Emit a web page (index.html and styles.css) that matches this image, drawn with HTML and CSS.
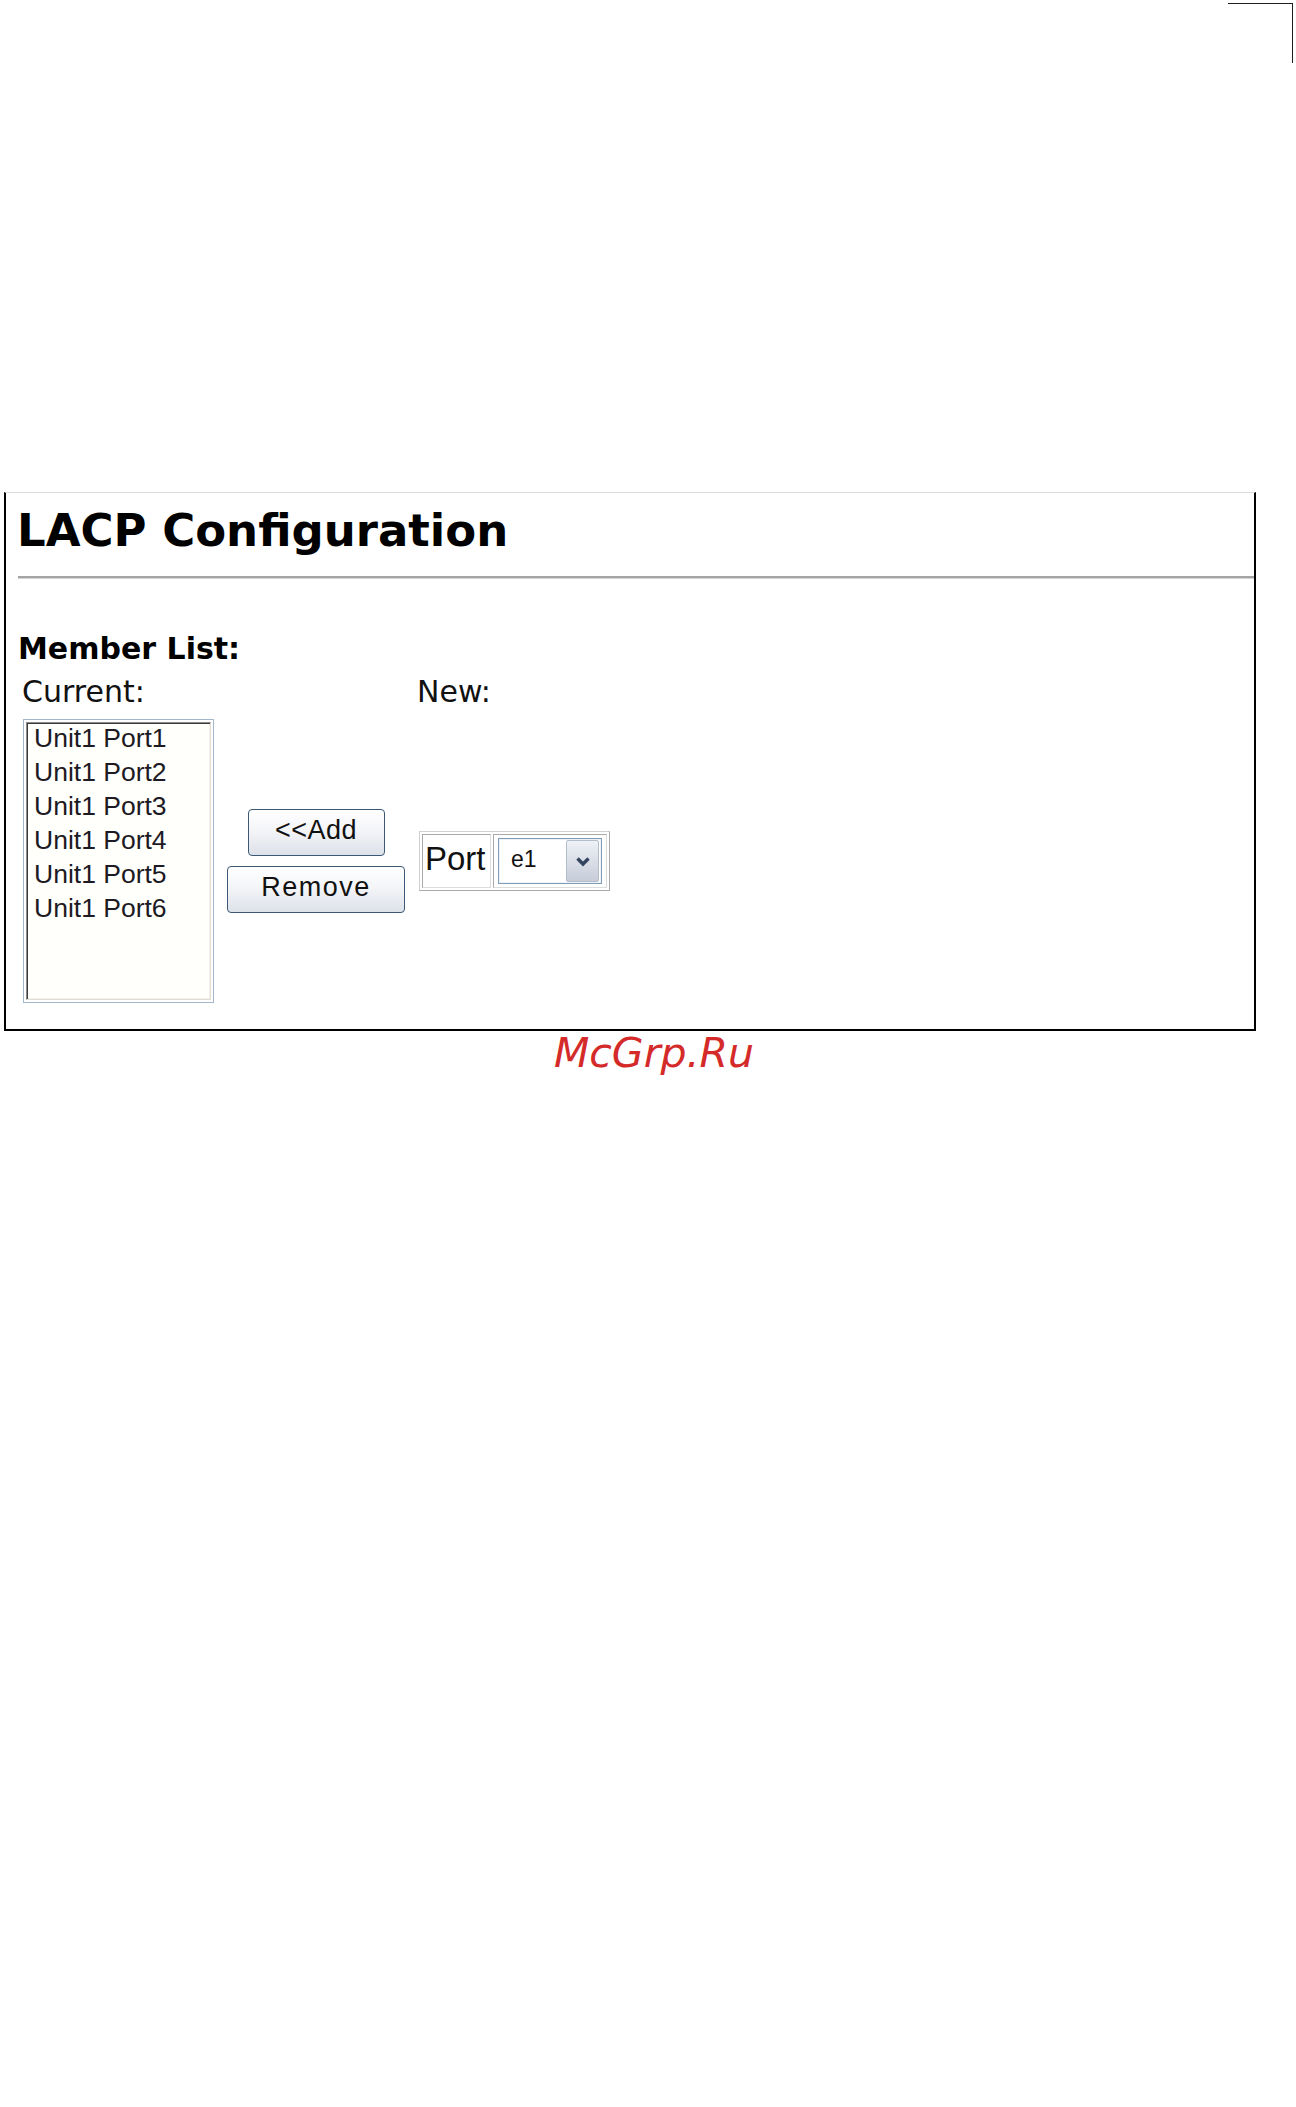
FILE: index.html
```html
<!DOCTYPE html>
<html lang="en">
<head>
<meta charset="utf-8">
<title>LACP Configuration</title>
<link rel="stylesheet" href="styles.css">
</head>
<body>
<div class="cropmark"></div>
<section class="frame">
  <h1 class="title">LACP Configuration</h1>
  <hr class="rule">
  <h2 class="section-label">Member List:</h2>
  <div class="labels">
    <span class="label label-current">Current:</span>
    <span class="label">New:</span>
  </div>
  <div class="editor">
    <div class="listbox">
      <div class="listbox-inner">
        <div class="option">Unit1 Port1</div>
        <div class="option">Unit1 Port2</div>
        <div class="option">Unit1 Port3</div>
        <div class="option">Unit1 Port4</div>
        <div class="option">Unit1 Port5</div>
        <div class="option">Unit1 Port6</div>
      </div>
    </div>
    <div class="actions">
      <button class="btn btn-add" type="button">&lt;&lt;Add</button>
      <button class="btn btn-remove" type="button">Remove</button>
    </div>
    <div class="portbox">
      <div class="port-cell">Port</div>
      <div class="select-cell">
        <div class="select">
          <span class="select-value">e1</span>
          <span class="select-arrow">
            <svg width="16" height="11" viewBox="0 0 16 11" aria-hidden="true">
              <polyline points="2.5,2.5 8,8 13.5,2.5" fill="none" stroke="#34455f" stroke-width="3.4" stroke-linejoin="miter"/>
            </svg>
          </span>
        </div>
      </div>
    </div>
  </div>
</section>
<div class="watermark">McGrp.Ru</div>
</body>
</html>
```
FILE: styles.css
```css
html, body {
  margin: 0;
  padding: 0;
  background: #ffffff;
}

body {
  width: 1296px;
  min-height: 2107px;
  font-family: "DejaVu Sans", sans-serif;
  color: #111111;
}

.cropmark {
  box-sizing: border-box;
  width: 65px;
  height: 60px;
  margin: 3px 0 0 1228px;
  border-top: 1px solid #1e1e1e;
  border-right: 1px solid #1e1e1e;
}

.frame {
  box-sizing: border-box;
  width: 1252px;
  margin: 429px 0 0 4px;
  border: 2px solid #000000;
  border-top: 1px solid #dcdcdc;
  padding: 0 0 26px 0;
}

.title {
  margin: 12px 0 0;
  padding-left: 11px;
  font: bold 45px/52px "DejaVu Sans", sans-serif;
  color: #000000;
}

.rule {
  margin: 19px 0 0 12px;
  height: 0;
  border: 0;
  border-top: 2px solid #a4a4a4;
  border-bottom: 1px solid #d4d4d4;
}

.section-label {
  margin: 53px 0 0;
  padding-left: 12px;
  font: bold 30px/34px "DejaVu Sans", sans-serif;
  color: #000000;
}

.labels {
  display: flex;
  margin-top: 9px;
  padding-left: 16px;
  font: 30px/34px "DejaVu Sans", sans-serif;
  color: #111111;
}

.label-current {
  width: 395px;
}

.editor {
  display: flex;
  align-items: center;
  margin-top: 10px;
  padding-left: 17px;
}

.listbox {
  box-sizing: border-box;
  width: 191px;
  height: 284px;
  border: 1px solid #a3b6cb;
  padding: 2px;
  background: #ffffff;
}

.listbox-inner {
  box-sizing: border-box;
  height: 100%;
  border-top: 1px solid #8a8a8a;
  border-left: 1px solid #8a8a8a;
  border-right: 1px solid #e2ded6;
  border-bottom: 1px solid #e2ded6;
  box-shadow: inset 1px 1px 0 #3c3c3c, inset -1px -1px 0 #f2f0ea;
  padding: 1px 0 0 7px;
  background: #fffffc;
  display: flex;
  flex-direction: column;
  gap: 5px;
}

.option {
  font: 26.5px/29px "Liberation Sans", Arial, sans-serif;
  color: #1d1a24;
  white-space: nowrap;
}

.actions {
  display: flex;
  flex-direction: column;
  align-items: center;
  gap: 10px;
  width: 178px;
  margin-left: 13px;
}

.btn {
  box-sizing: border-box;
  height: 47px;
  margin: 0;
  padding: 0 0 5px;
  border: 1px solid #3b5877;
  border-radius: 4px;
  background: linear-gradient(to bottom, #ffffff 0%, #f4f5f8 45%, #dde1e9 100%);
  box-shadow: inset 0 1px 0 #ffffff;
  font: 27px/40px "Liberation Sans", Arial, sans-serif;
  letter-spacing: 1px;
  color: #111111;
  appearance: none;
}

.btn-add {
  width: 137px;
  letter-spacing: 0.5px;
}

.btn-remove {
  width: 178px;
  letter-spacing: 1.5px;
}

.portbox {
  display: flex;
  gap: 2px;
  margin-left: 14px;
  padding: 2px;
  border: 1px solid;
  border-color: #d0d0d0 #a9a9a9 #a9a9a9 #d0d0d0;
}

.port-cell {
  box-sizing: border-box;
  width: 69px;
  height: 54px;
  border: 1px solid;
  border-color: #a9a9a9 #dcdcdc #dcdcdc #a9a9a9;
  padding: 0 0 5px 2px;
  font: 33px/47px "Liberation Sans", Arial, sans-serif;
  color: #111111;
}

.select-cell {
  box-sizing: border-box;
  width: 114px;
  height: 54px;
  border: 1px solid;
  border-color: #a9a9a9 #dcdcdc #dcdcdc #a9a9a9;
  display: flex;
  align-items: center;
  padding-left: 4px;
}

.select {
  box-sizing: border-box;
  width: 104px;
  height: 46px;
  border: 1px solid #7f9db9;
  box-shadow: inset 0 0 0 1px #eef2f7;
  background: #ffffff;
  display: flex;
  align-items: center;
  justify-content: space-between;
  padding: 1px 2px 1px 12px;
}

.select-value {
  font: 23px/26px "Liberation Sans", Arial, sans-serif;
  color: #111111;
  padding-bottom: 4px;
}

.select-arrow {
  box-sizing: border-box;
  width: 33px;
  height: 42px;
  border: 1px solid #b3bdcc;
  border-radius: 2px;
  background: linear-gradient(to bottom, #eef1f6 0%, #d6dbe4 60%, #c6cdd9 100%);
  display: flex;
  align-items: center;
  justify-content: center;
}

.watermark {
  margin-top: 1px;
  padding-left: 12px;
  text-align: center;
  font: italic 41px/42px "DejaVu Sans", sans-serif;
  color: #d42a2a;
}
```
